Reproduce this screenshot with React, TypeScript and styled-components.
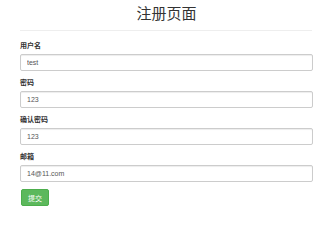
import React, { useState } from 'react';
import styled, { createGlobalStyle } from 'styled-components';

const GlobalStyle = createGlobalStyle`
  html, body {
    margin: 0;
    padding: 0;
    background: #fff;
  }
  body {
    font-family: "Liberation Sans", "Noto Sans CJK SC", Arial, sans-serif;
    color: #333;
  }
  * {
    box-sizing: border-box;
  }
`;

const Container = styled.div`
  padding: 0 7px 0 20px;
`;

const Title = styled.h1`
  margin: 4px 0 9px;
  font-size: 15px;
  line-height: 17px;
  font-weight: 400;
  text-align: center;
  color: #333;
  font-family: "Noto Sans CJK SC", "Liberation Sans", sans-serif;
`;

const Divider = styled.hr`
  margin: 0 1px 10px 0;
  border: 0;
  border-top: 1px solid #eee;
`;

const FormGroup = styled.div`
  margin-bottom: 7.5px;
`;

const Label = styled.label`
  display: block;
  margin-bottom: 2.5px;
  font-size: 7px;
  line-height: 10px;
  font-weight: 700;
  color: #333;
`;

const Input = styled.input`
  display: block;
  width: 100%;
  height: 17px;
  padding: 3px 6px;
  font-size: 7px;
  line-height: 10px;
  color: #555;
  font-family: "Liberation Sans", Arial, sans-serif;
  background: #fff;
  border: 1px solid #ccc;
  border-radius: 2px;
  box-shadow: inset 0 1px 1px rgba(0, 0, 0, 0.075);
  outline: none;
`;

const SubmitButton = styled.button`
  display: block;
  height: 17px;
  margin-left: 1px;
  padding: 3px 6px;
  font-size: 7px;
  line-height: 10px;
  color: #fff;
  background: #5cb85c;
  border: 1px solid #4cae4c;
  border-radius: 2px;
  font-family: "Noto Sans CJK SC", sans-serif;
  cursor: pointer;
`;

const fields = [
  { key: 'username', label: '用户名', type: 'text', value: 'test' },
  { key: 'password', label: '密码', type: 'text', value: '123' },
  { key: 'confirm', label: '确认密码', type: 'text', value: '123' },
  { key: 'email', label: '邮箱', type: 'text', value: '14@11.com' },
];

const App: React.FC = () => {
  const [values, setValues] = useState<Record<string, string>>(
    Object.fromEntries(fields.map(f => [f.key, f.value]))
  );

  return (
    <Container>
      <GlobalStyle />
      <Title>注册页面</Title>
      <Divider />
      <form onSubmit={e => e.preventDefault()}>
        {fields.map(f => (
          <FormGroup key={f.key}>
            <Label htmlFor={f.key}>{f.label}</Label>
            <Input
              id={f.key}
              type={f.type}
              value={values[f.key]}
              onChange={e => setValues(prev => ({ ...prev, [f.key]: e.target.value }))}
            />
          </FormGroup>
        ))}
        <SubmitButton type="submit">提交</SubmitButton>
      </form>
    </Container>
  );
};

export default App;
